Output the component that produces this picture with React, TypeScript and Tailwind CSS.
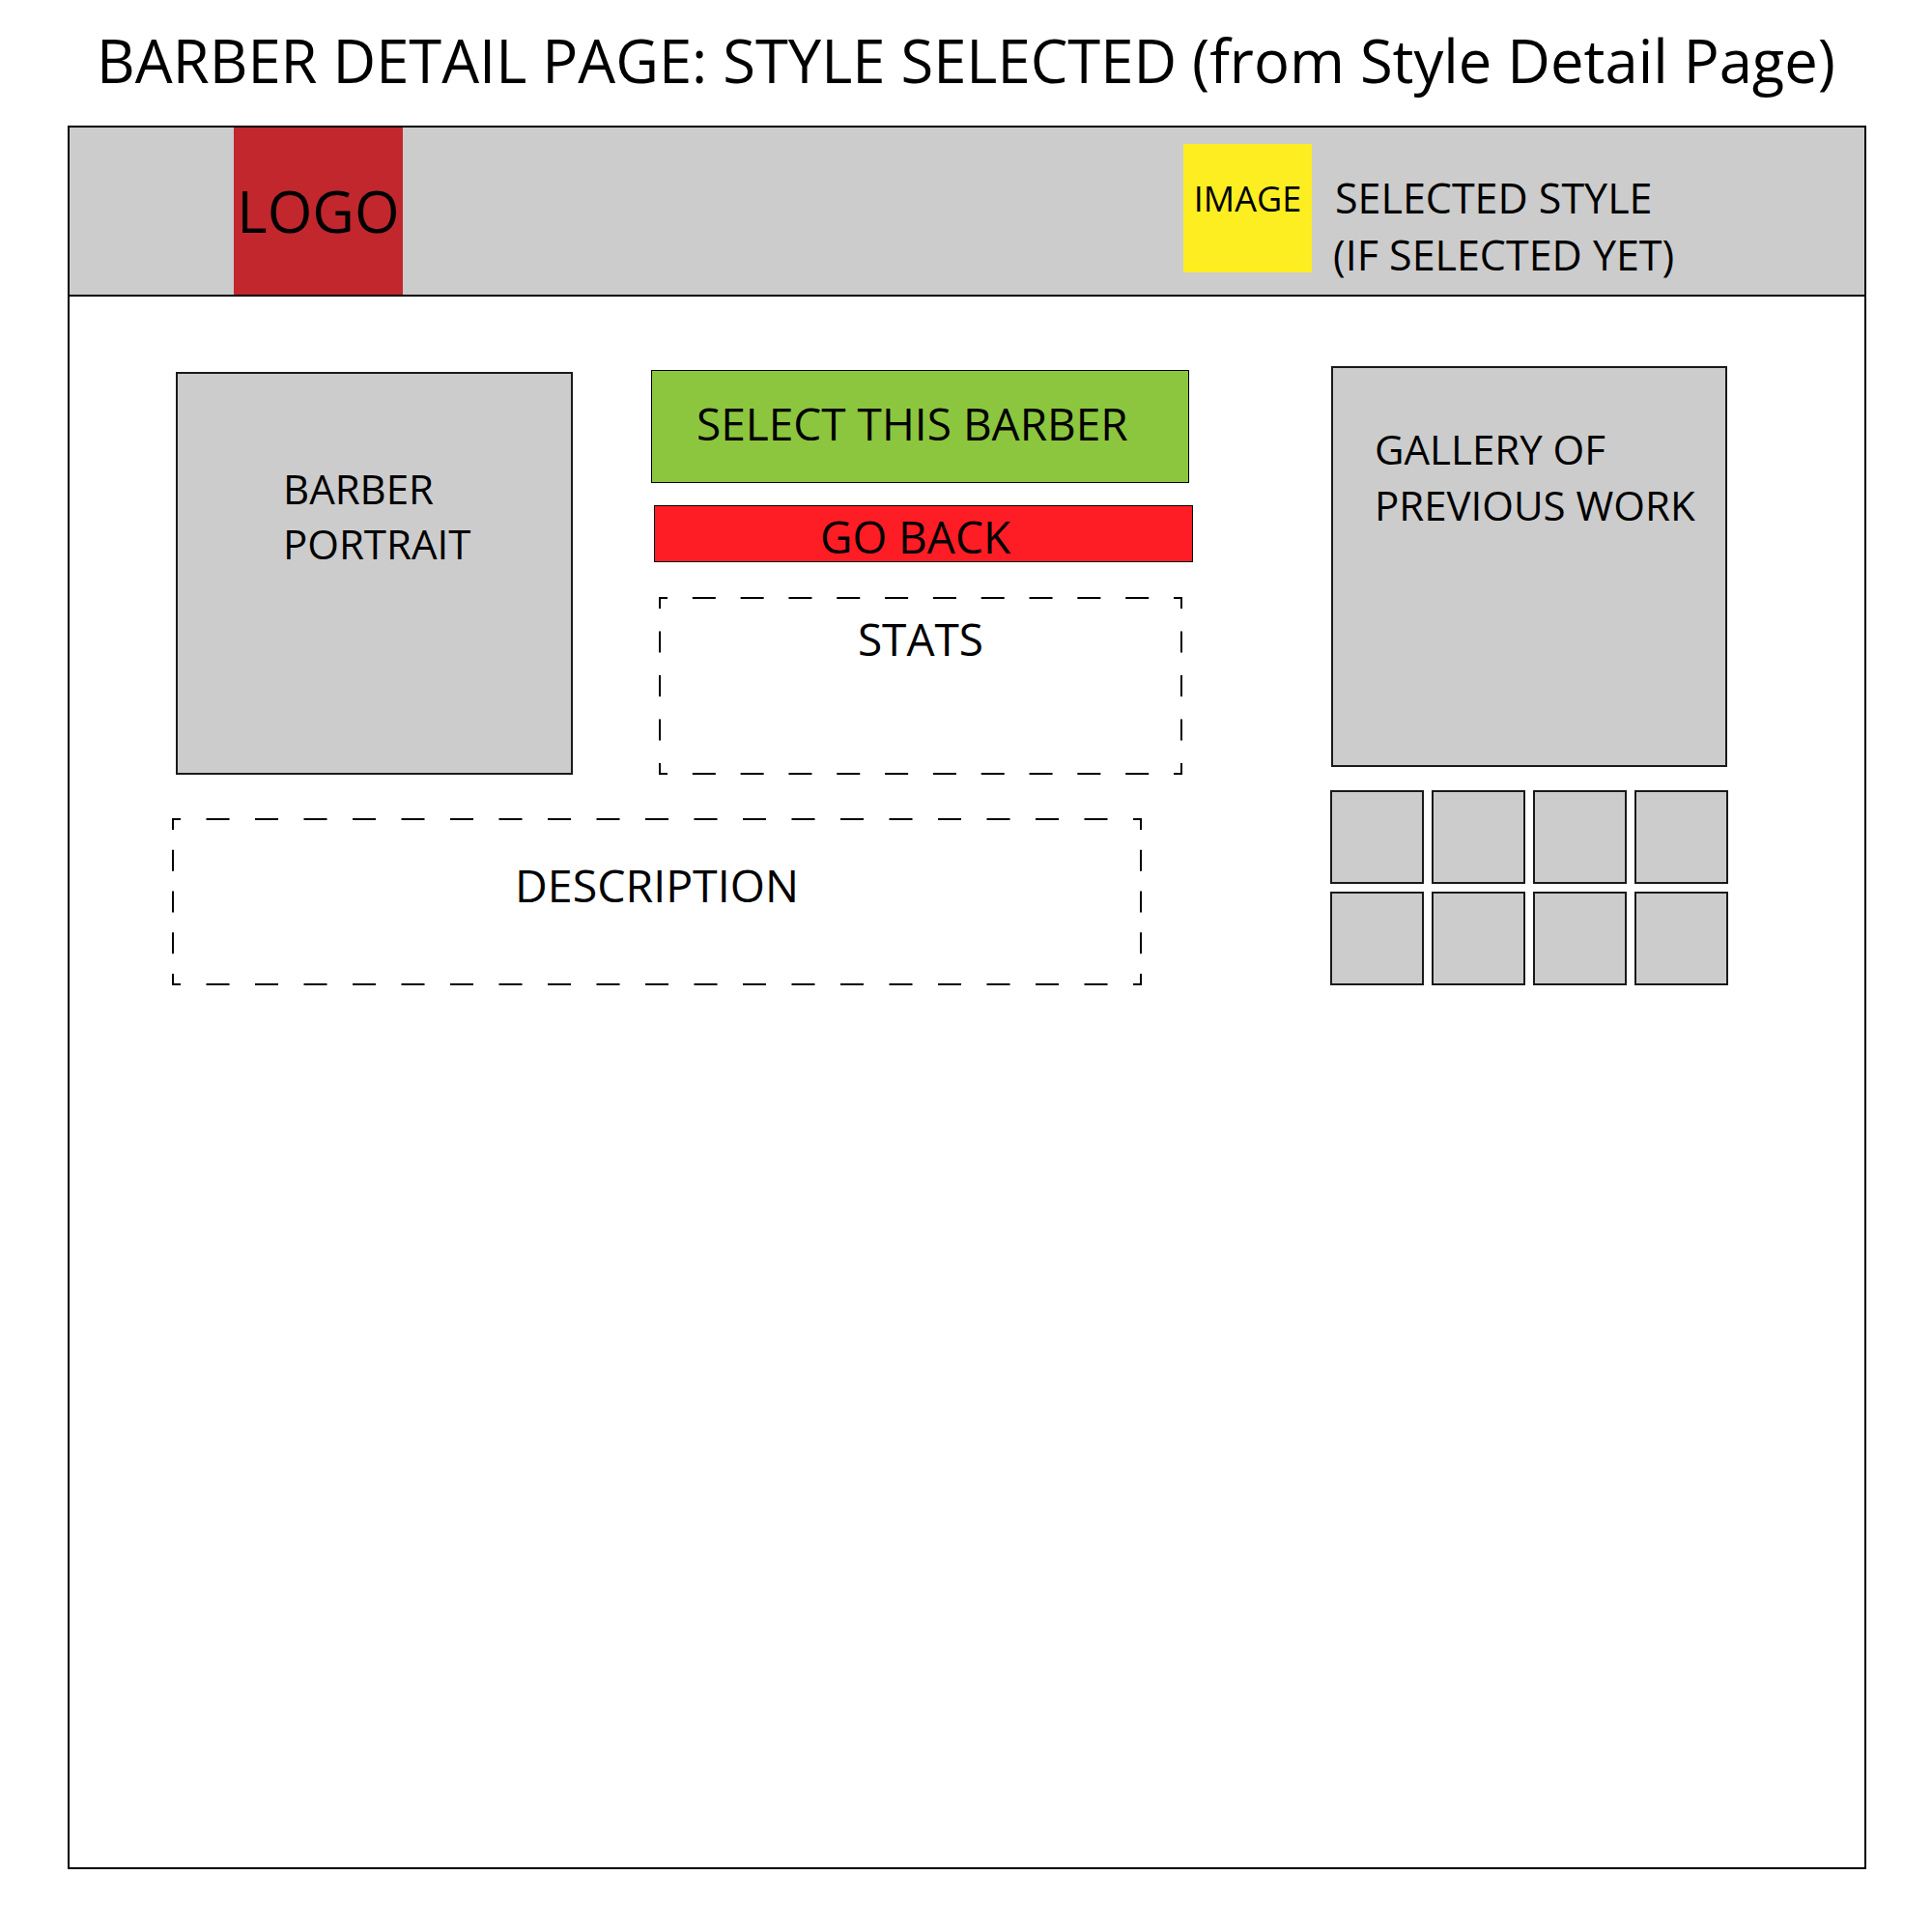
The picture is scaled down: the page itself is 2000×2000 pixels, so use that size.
import React from "react";

// dashed outline drawn like the wireframe tool does it: short tick at each corner, even dashes between
function DashedOutline({ w, h }: { w: number; h: number }) {
  const side = (len: number, dash: number, gap0: number, tick: number) => {
    const n = Math.max(1, Math.round((len - 2 * tick - gap0) / (dash + gap0)));
    const gap = (len - 2 * tick - n * dash) / (n + 1);
    const parts: number[] = [tick];
    for (let i = 0; i < n; i++) parts.push(gap, dash);
    parts.push(gap, tick);
    return parts.join(" ");
  };
  const hx = side(w, 24, 26, 9);
  const vy = side(h, 22, 23, 12);

  return (
    <svg className="absolute inset-0 pointer-events-none" width={w} height={h}>
      <g stroke="#000" strokeWidth={2} fill="none">
        <line x1={0} y1={1} x2={w} y2={1} strokeDasharray={hx} />
        <line x1={0} y1={h - 1} x2={w} y2={h - 1} strokeDasharray={hx} />
        <line x1={1} y1={0} x2={1} y2={h} strokeDasharray={vy} />
        <line x1={w - 1} y1={0} x2={w - 1} y2={h} strokeDasharray={vy} />
      </g>
    </svg>
  );
}

const thumbs = [1, 2, 3, 4, 5, 6, 7, 8];

export default function App() {
  return (
    <div className="w-[2000px] min-h-[2000px] bg-white text-black font-['Open_Sans',sans-serif] pt-[32px]">
      {/* Page title */}
      <h1 className="text-center text-[61.5px] leading-none font-normal whitespace-nowrap">
        BARBER DETAIL PAGE: STYLE SELECTED (from Style Detail Page)
      </h1>

      {/* Browser frame */}
      <div className="ml-[70px] mt-[36px] w-[1862px] h-[1805px] border-2 border-black flex flex-col">
        {/* Header bar */}
        <header className="h-[175px] shrink-0 bg-[#cccccc] border-b-2 border-black flex items-start">
          <div className="ml-[170px] w-[175px] h-full bg-[#c1272d] flex items-center justify-center">
            <span className="text-[60px] leading-none whitespace-nowrap">LOGO</span>
          </div>
          <div className="ml-[808px] mt-[17px] w-[133px] h-[133px] bg-[#fcee21] pt-[39px] text-center">
            <span className="text-[36px] leading-none">IMAGE</span>
          </div>
          <div className="ml-[24px] mt-[43px] text-[43px] leading-[59px] whitespace-nowrap">
            <div>SELECTED STYLE</div>
            <div className="-ml-[2px]">(IF SELECTED YET)</div>
          </div>
        </header>

        {/* Page body */}
        <main className="flex items-start pt-[72px] pl-[106px]">
          <div className="flex flex-col">
            <div className="flex items-start">
              <div className="ml-[4px] mt-[6px] w-[411px] h-[417px] bg-[#cccccc] border-2 border-[#1a1a1a] pt-[90px] pl-[109px] text-[42px] leading-[57px]">
                <div>BARBER</div>
                <div>PORTRAIT</div>
              </div>

              <div className="ml-[81px] mt-[4px] flex flex-col items-start">
                <button className="w-[557px] h-[117px] bg-[#8cc63f] border border-black flex items-center pl-[46px] pb-[6px] text-[46px] leading-none whitespace-nowrap">
                  SELECT THIS BARBER
                </button>
                <button className="ml-[3px] mt-[23px] w-[558px] h-[59px] bg-[#ff1d25] border border-black flex items-center justify-center pt-[6px] pr-[17px] text-[46px] leading-none whitespace-nowrap">
                  GO BACK
                </button>
                <div className="relative ml-[8px] mt-[36px] w-[542px] h-[184px] pt-[20px] text-center text-[46px] leading-none">
                  <DashedOutline w={542} h={184} />
                  STATS
                </div>
              </div>
            </div>

            <div className="relative mt-[45px] w-[1004px] h-[173px] pt-[46px] text-center text-[46.5px] leading-none">
              <DashedOutline w={1004} h={173} />
              DESCRIPTION
            </div>
          </div>

          {/* Gallery */}
          <div className="ml-[143px] flex flex-col">
            <div className="w-[410px] h-[415px] bg-[#cccccc] border-2 border-[#1a1a1a] pt-[55px] pl-[43px] text-[42px] leading-[58px] whitespace-nowrap">
              <div>GALLERY OF</div>
              <div>PREVIOUS WORK</div>
            </div>
            <div className="mt-[24px] -ml-[1px] grid grid-cols-[repeat(4,97px)] gap-[8px]">
              {thumbs.map((t) => (
                <div key={t} className="w-[97px] h-[97px] bg-[#cccccc] border-2 border-[#1a1a1a]" />
              ))}
            </div>
          </div>
        </main>
      </div>
    </div>
  );
}
